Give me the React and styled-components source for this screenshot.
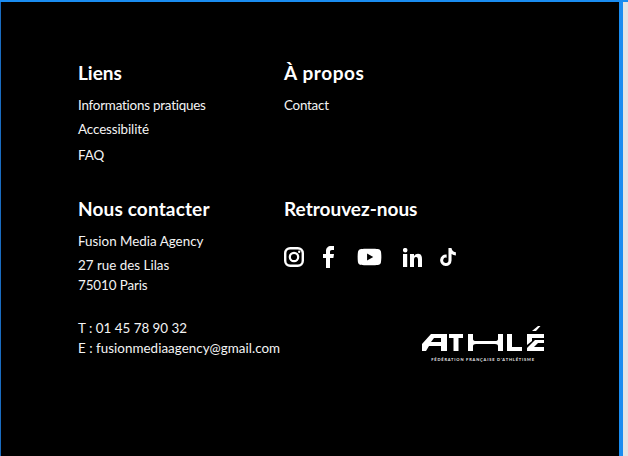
import React from 'react';
import styled, { createGlobalStyle } from 'styled-components';
import { FaYoutube, FaTiktok } from 'react-icons/fa';

const GlobalStyle = createGlobalStyle`
  html, body {
    margin: 0;
    padding: 0;
    background: #000;
  }
`;

const Page = styled.div`
  display: flex;
  width: 628px;
  height: 456px;
  overflow: hidden;
  box-sizing: border-box;
  border-top: 2px solid #1a8cf0;
`;

const Footer = styled.footer`
  flex: 1;
  box-sizing: border-box;
  padding: 60px 0 0 77px;
  background: #000;
  border-left: 1px solid #1a6cc0;
  color: #fff;
  font-family: Lato, "Liberation Sans", sans-serif;
`;

const Rail = styled.div`
  width: 9px;
  box-sizing: border-box;
  background: #e4e4e4;
  border-left: 4px solid #1a8cf0;
`;

const Grid = styled.div`
  display: grid;
  grid-template-columns: 206px 1fr;
  grid-template-rows: 136px auto;
`;

const Column = styled.div`
  display: flex;
  flex-direction: column;
`;

const Heading = styled.h2`
  margin: 0 0 ${(p) => p.$after ?? 11}px;
  font-size: 19px;
  line-height: 22px;
  font-weight: 700;
  letter-spacing: ${(p) => p.$track || 0}px;
  white-space: nowrap;
`;

const Item = styled.a`
  display: block;
  margin-top: ${(p) => p.$top || 0}px;
  font-size: 13.4px;
  line-height: 20px;
  letter-spacing: ${(p) => p.$track || 0}px;
  white-space: nowrap;
  color: #f4f4f4;
`;

const Socials = styled.div`
  display: flex;
  align-items: center;
  height: 22px;
  margin-top: 26px;
`;

const Social = styled.span`
  display: flex;
  justify-content: center;
  width: ${(p) => p.$width}px;
  margin-right: ${(p) => p.$gap || 0}px;
  font-size: ${(p) => p.$size || 20}px;
`;

const LogoWrap = styled.div`
  display: flex;
  flex-direction: column;
  align-items: center;
  width: 126px;
  margin: 57px 0 0 136px;
`;

const LogoText = styled.span`
  margin-top: 2px;
  font-size: 4px;
  line-height: 5px;
  font-weight: 700;
  letter-spacing: 0.82px;
  white-space: nowrap;
  color: #e8e8e8;
`;

const InstagramIcon = () => (
  <svg width="20" height="20" viewBox="0 0 20 20" fill="none" stroke="#fff">
    <rect x="1.2" y="1.2" width="17.6" height="17.6" rx="5" strokeWidth="2.4" />
    <circle cx="10" cy="10" r="4.2" strokeWidth="2.2" />
    <circle cx="15.2" cy="4.8" r="1.2" fill="#fff" stroke="none" />
  </svg>
);

const FacebookIcon = () => (
  <svg width="11" height="22" viewBox="0 0 11 22" fill="#fff">
    <path d="M3 22 V12 H0 V8 H3 V5 C3 2 5 0 8 0 H11 V4 H9 C7.5 4 7 4.7 7 6 V8 H11 L10.4 12 H7 V22 Z" />
  </svg>
);

const LinkedinIcon = () => (
  <svg width="19" height="19" viewBox="0 0 19 19" fill="#fff">
    <circle cx="2.2" cy="2.2" r="2.3" />
    <rect x="0" y="6" width="4.2" height="13" />
    <path d="M7 6 H11 V8 C12 6.5 13.5 5.8 15 5.8 C18 5.8 19 8 19 11 V19 H15 V12 C15 10 14.4 9 13 9 C11.6 9 11 10 11 12 V19 H7 Z" />
  </svg>
);

const AthleLogo = () => (
  <svg width="126" height="30" viewBox="0 0 126 30" fill="#fff" fillRule="evenodd">
    <path d="M2 19 L11 9 H27 V26 H21 V21 H9 L6 26 H2 Z M11 17 H21 V13 H14 Z" />
    <path d="M29 9 H43 V13 H38.5 V26 H33.5 V13 H29 Z" />
    <path d="M48 9 H53 V14 Q53 16 56 16 H75 Q78 16 78 14 V9 H83 V26 H78 V21 Q78 19 75 19 H56 Q53 19 53 21 V26 H48 Z" />
    <path d="M87 9 H92 V22 H102 V26 H87 Z" />
    <path d="M107 9 H124 V13 H112 V16 L107 20 Z" />
    <path d="M107 26 V23 L115 15 H124 V18 H118 L114 22 H124 V26 Z" />
    <path d="M112 6 L118 1 H120.5 L116 6 Z" />
  </svg>
);

const App = () => (
  <Page>
    <GlobalStyle />
    <Footer>
      <Grid>
        <Column>
          <Heading>Liens</Heading>
          <Item $track={-0.22}>Informations pratiques</Item>
          <Item $top={4} $track={-0.1}>Accessibilité</Item>
          <Item $top={6}>FAQ</Item>
        </Column>
        <Column>
          <Heading $track={0.6}>À propos</Heading>
          <Item $track={-0.25}>Contact</Item>
        </Column>
        <Column>
          <Heading $track={0.15}>Nous contacter</Heading>
          <Item>Fusion Media Agency</Item>
          <Item $top={4}>27 rue des Lilas</Item>
          <Item $track={-0.1}>75010 Paris</Item>
          <Item $top={23}>T : 01 45 78 90 32</Item>
          <Item $track={0.03}>E : fusionmediaagency@gmail.com</Item>
        </Column>
        <Column>
          <Heading $after={0}>Retrouvez-nous</Heading>
          <Socials>
            <Social $width={20} $gap={19}><InstagramIcon /></Social>
            <Social $width={11} $gap={23}><FacebookIcon /></Social>
            <Social $width={25} $gap={21} $size={26}><FaYoutube /></Social>
            <Social $width={19} $gap={18}><LinkedinIcon /></Social>
            <Social $width={16} $size={18}><FaTiktok /></Social>
          </Socials>
          <LogoWrap>
            <AthleLogo />
            <LogoText>FÉDÉRATION FRANÇAISE D'ATHLÉTISME</LogoText>
          </LogoWrap>
        </Column>
      </Grid>
    </Footer>
    <Rail />
  </Page>
);

export default App;
